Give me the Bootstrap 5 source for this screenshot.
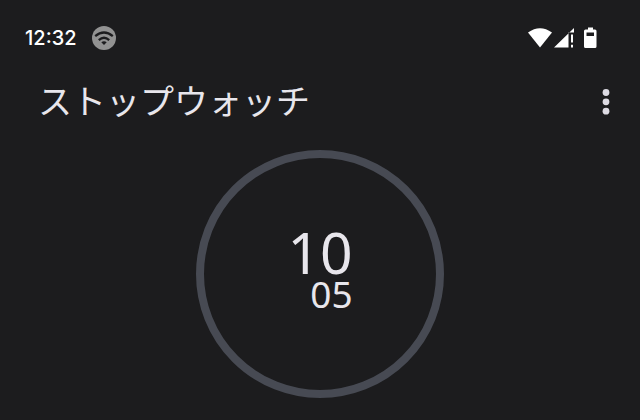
<!DOCTYPE html>
<html lang="ja" data-bs-theme="dark">
<head>
<meta charset="utf-8">
<meta name="viewport" content="width=device-width, initial-scale=1">
<title>ストップウォッチ</title>
<link href="https://cdn.jsdelivr.net/npm/bootstrap@5.3.0/dist/css/bootstrap.min.css" rel="stylesheet">
<style>
  body { background: #1c1c1e; color: #e8e6ec; font-family: "Noto Sans", "Noto Sans CJK JP", sans-serif; }
  svg { display: block; }
  .status-bar { padding: 24px 42px 0 25px; color: #fff; }
  .status-left { gap: 15px; }
  .clock { font-family: Inter, sans-serif; font-size: 20px; line-height: 28px; font-weight: 500; }
  .app-bar { padding: 24px 24px 0 38px; }
  .app-title { font-family: "Noto Sans CJK JP", sans-serif; font-size: 34px; line-height: 48px; font-weight: 400; color: #e8e6ec; }
  .menu-btn { width: 20px; height: 48px; color: #dddbe3; }
  .dial-area { padding-top: 26px; }
  .dial { width: 248px; height: 248px; border: 8px solid #474a53; border-radius: 50%; }
  .digits { text-align: right; padding-bottom: 8px; }
  .seconds { font-size: 57px; line-height: 48px; }
  .hundredths { font-size: 37px; line-height: 36px; }
</style>
</head>
<body>
<header>
  <div class="status-bar d-flex align-items-center justify-content-between">
    <div class="status-left d-flex align-items-center">
      <time class="clock">12:32</time>
      <svg width="24" height="28" viewBox="0 0 24 28" role="img" aria-label="Wi-Fi">
        <circle cx="12" cy="14" r="12" fill="#929292"/>
        <g fill="none" stroke="#1c1c1e" stroke-width="2.3">
          <path d="M3.2 12.2Q12 4.8 20.8 12.2"/>
          <path d="M6.8 16.1Q12 11.5 17.2 16.1"/>
        </g>
        <path d="M9.3 18.3Q12 16.3 14.7 18.3L12 21z" fill="#1c1c1e"/>
      </svg>
    </div>
    <svg width="70" height="28" viewBox="0 0 70 28" fill="currentColor" role="img" aria-label="Wi-Fi, 電波, バッテリー">
      <path d="M0 8.600Q12-.2 24 8.600L12 23.500z"/>
      <path d="M26 23.500L46 4V8.500H40.500V23.500z"/>
      <path d="M43 10.500h2v8H43zM43 20.700h2v2.800H43z"/>
      <path fill-rule="evenodd" d="M60 3.500h5v2h2q1.500 0 1.500 1.500v15.500q0 1.500-1.500 1.500h-9.500q-1.500 0-1.500-1.500V7q0-1.500 1.500-1.500h2.500zM58.500 8.500v3.500h7.500V8.500z"/>
    </svg>
  </div>
  <div class="app-bar d-flex align-items-center justify-content-between">
    <h1 class="app-title m-0">ストップウォッチ</h1>
    <button type="button" class="menu-btn btn border-0 p-0" aria-label="その他">
      <svg width="20" height="48" viewBox="0 0 20 48" fill="currentColor"><circle cx="10" cy="16.500" r="3.400"/><circle cx="10" cy="25.800" r="3.400"/><circle cx="10" cy="35.200" r="3.400"/></svg>
    </button>
  </div>
</header>
<main class="dial-area d-flex justify-content-center">
  <div class="dial d-flex align-items-center justify-content-center">
    <div class="digits" role="timer">
      <div class="seconds">10</div>
      <div class="hundredths">05</div>
    </div>
  </div>
</main>
<script src="https://cdn.jsdelivr.net/npm/bootstrap@5.3.0/dist/js/bootstrap.bundle.min.js"></script>
</body>
</html>
